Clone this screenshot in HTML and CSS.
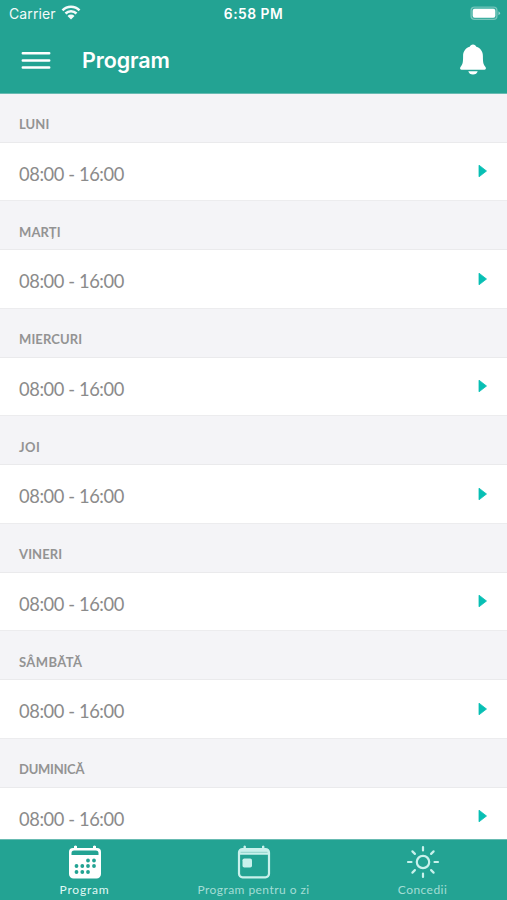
FILE: index.html
```html
<!DOCTYPE html>
<html lang="ro">
<head>
<meta charset="utf-8">
<title>Program</title>
<link rel="stylesheet" href="styles.css">
</head>
<body>
<div class="app">
<header class="top">
  <div class="status">
    <div class="carrier"><span>Carrier</span>
      <svg width="20" height="16" viewBox="0 0 20 16" fill="none" stroke="#fff" stroke-width="2.6"><path d="M1.500 6.300a12 12 0 0 1 17 0M4.500 9.500a7.900 7.900 0 0 1 11 0"/><path d="M10 15.500 6.500 12a4.900 4.900 0 0 1 7 0z" fill="#fff" stroke="none"/></svg>
    </div>
    <div class="clock">6:58 PM</div>
    <svg class="battery" width="31" height="15" viewBox="0 0 31 15"><rect x="1" y="1" width="26" height="12.5" rx="3.5" fill="#fff" fill-opacity=".12" stroke="#fff" stroke-opacity=".35" stroke-width="1.2"/><rect x="2.700" y="2.700" width="22.600" height="9.100" rx="2" fill="#fff"/><path d="M28.500 5.200q3 2 0 4z" fill="#fff" fill-opacity=".55"/></svg>
  </div>
  <div class="nav">
    <svg class="menu" width="30" height="20" viewBox="0 0 30 20" stroke="#fff" stroke-width="2.500" stroke-linecap="round"><path d="M1.800 2.200h26.400M1.800 9.400h26.400M1.800 16.600h26.400"/></svg>
    <h1>Program</h1>
    <svg class="bell" width="28" height="32" viewBox="0 0 28 32" fill="#fff"><path d="M14 .5c1.700 0 2.900 1 3.300 2.300 4.200 1.300 6.600 4.700 6.600 9.200 0 6.500.3 8.200 2.600 11 .9 1.300.4 2.700-1.100 2.700H2.600c-1.500 0-2-1.400-1.100-2.700C3.800 20.200 4.100 18.500 4.100 12c0-4.500 2.400-7.900 6.600-9.200C11.100 1.500 12.300.5 14 .5zM9.300 27.200h9.400c-.5 2-2.300 3.300-4.700 3.300s-4.200-1.300-4.700-3.300z"/></svg>
  </div>
</header>
<main class="days">
  <section><h2>LUNI</h2><div class="row"><span>08:00 - 16:00</span><svg width="10" height="14" viewBox="0 0 10 14"><path d="M1 1.200 8.500 7 1 12.800z"/></svg></div></section>
  <section><h2>MARȚI</h2><div class="row"><span>08:00 - 16:00</span><svg width="10" height="14" viewBox="0 0 10 14"><path d="M1 1.200 8.500 7 1 12.800z"/></svg></div></section>
  <section><h2>MIERCURI</h2><div class="row"><span>08:00 - 16:00</span><svg width="10" height="14" viewBox="0 0 10 14"><path d="M1 1.200 8.500 7 1 12.800z"/></svg></div></section>
  <section><h2 class="wide">JOI</h2><div class="row"><span>08:00 - 16:00</span><svg width="10" height="14" viewBox="0 0 10 14"><path d="M1 1.200 8.500 7 1 12.800z"/></svg></div></section>
  <section><h2>VINERI</h2><div class="row"><span>08:00 - 16:00</span><svg width="10" height="14" viewBox="0 0 10 14"><path d="M1 1.200 8.500 7 1 12.800z"/></svg></div></section>
  <section><h2 class="wide">SÂMBĂTĂ</h2><div class="row"><span>08:00 - 16:00</span><svg width="10" height="14" viewBox="0 0 10 14"><path d="M1 1.200 8.500 7 1 12.800z"/></svg></div></section>
  <section><h2 class="narrow">DUMINICĂ</h2><div class="row"><span>08:00 - 16:00</span><svg width="10" height="14" viewBox="0 0 10 14"><path d="M1 1.200 8.500 7 1 12.800z"/></svg></div></section>
</main>
<footer class="tabs">
  <div class="tab active">
    <svg width="34" height="34" viewBox="0 0 34 34"><path d="M6 1.200q1.500-1.200 3 0V3h16V1.200q1.500-1.200 3 0V3h1a4 4 0 0 1 4 4v22a4.500 4.500 0 0 1-4.500 4.500h-23A4.500 4.500 0 0 1 1 29V7a4 4 0 0 1 4-4h1z" fill="#fff"/><path d="M3.500 10V8q0-2.600 2.600-2.600h21.800q2.600 0 2.600 2.600v2z" fill="#23a393"/><path d="M20 15.500h.01M26 15.500h.01M8.500 21h.01M14.300 21h.01M20 21h.01M26 21h.01M8.500 27h.01M14.300 27h.01M20 27h.01" stroke="#23a393" stroke-width="3.800" stroke-linecap="round"/></svg>
    <span>Program</span>
  </div>
  <div class="tab day">
    <svg width="34" height="34" viewBox="0 0 34 34"><rect x="2" y="4" width="30" height="28.300" rx="3.500" fill="none" stroke="#c9f1ec" stroke-width="2.200"/><path d="M2 9.800V7q0-3 3-3h24q3 0 3 3v2.800zM6.500 4V1.200q1.200-1.200 2.400 0V4zM25 4V1.200q1.200-1.200 2.400 0V4z" fill="#c9f1ec"/><path d="M3.500 7.300h27" stroke="#81cbc2" stroke-width=".8"/><rect x="5.500" y="13.500" width="9.500" height="9" rx="1.800" fill="#c9f1ec"/></svg>
    <span>Program pentru o zi</span>
  </div>
  <div class="tab leave">
    <svg width="34" height="34" viewBox="0 0 34 34" fill="none" stroke="#c9f1ec" stroke-width="2.200" stroke-linecap="round"><circle cx="17" cy="17" r="6.200"/><path d="M17 2v3.500M17 28.500V32M2 17h3.500M28.500 17H32M6.400 6.400l2.500 2.500M25.100 25.100l2.500 2.500M6.400 27.600l2.500-2.500M25.100 8.900l2.500-2.500"/></svg>
    <span>Concedii</span>
  </div>
</footer>
</div>
</body>
</html>
```
FILE: styles.css
```css
* { box-sizing: border-box; }
body { margin: 0; font-family: Lato, sans-serif; background: #fff; }
.app { width: 507px; height: 900px; display: flex; flex-direction: column; overflow: hidden; }
.top { height: 94px; flex: none; background: #23a393; color: #fff; border-bottom: 1px solid #68bbb2; font-family: Inter, sans-serif; }
.status { height: 28px; display: grid; grid-template-columns: 1fr auto 1fr; align-items: center; padding: 0 6px 0 9px; font-size: 14px; }
.carrier { display: flex; align-items: center; gap: 5px; letter-spacing: .1px; opacity: .95; margin-top: -1px; }
.carrier svg { margin-top: -3px; }
.clock { font-weight: 600; letter-spacing: .5px; margin: 0 3px 0 0; font-size: 13.8px; }
.battery { justify-self: end; margin-top: -2px; }
.nav { height: 64px; display: flex; align-items: center; padding: 0 20px 0 21px; }
.menu { margin-top: 2px; }
.nav h1 { margin: 0 auto 0 31px; font-size: 21.5px; line-height: 30px; font-weight: 600; letter-spacing: -.1px; }
.days { height: 745px; flex: none; overflow: hidden; }
.days section { height: 107.5px; background: #f4f4f7; }
.days h2 { margin: 0; height: 48.5px; padding: 21px 19px 0; border-bottom: 1px solid #eaeaec; font-size: 13px; line-height: 18px; font-weight: 700; color: #939393; letter-spacing: .1px; }
.days .wide { letter-spacing: .4px; }
.days .narrow { letter-spacing: -.25px; }
.row { height: 58.5px; padding: 0 19px; display: flex; align-items: center; justify-content: space-between; background: #fff; border-bottom: 1px solid #ececee; font-size: 18.3px; line-height: 24px; font-weight: 400; color: #8b8b8b; }
.row span { margin-top: 5px; letter-spacing: -.4px; }
.row svg { fill: #08bfb4; stroke: #08bfb4; stroke-width: .8; stroke-linejoin: round; }
.tabs { height: 61px; flex: none; display: grid; grid-template-columns: repeat(3, 1fr); background: #23a393; border-top: 1px solid #68bbb2; color: #a3ddd5; }
.tab { display: flex; flex-direction: column; align-items: center; padding-top: 5px; font-size: 12px; line-height: 16px; letter-spacing: .45px; }
.tab span { margin-top: 3px; }
.active { color: #e0f8f5; letter-spacing: .8px; }
```
